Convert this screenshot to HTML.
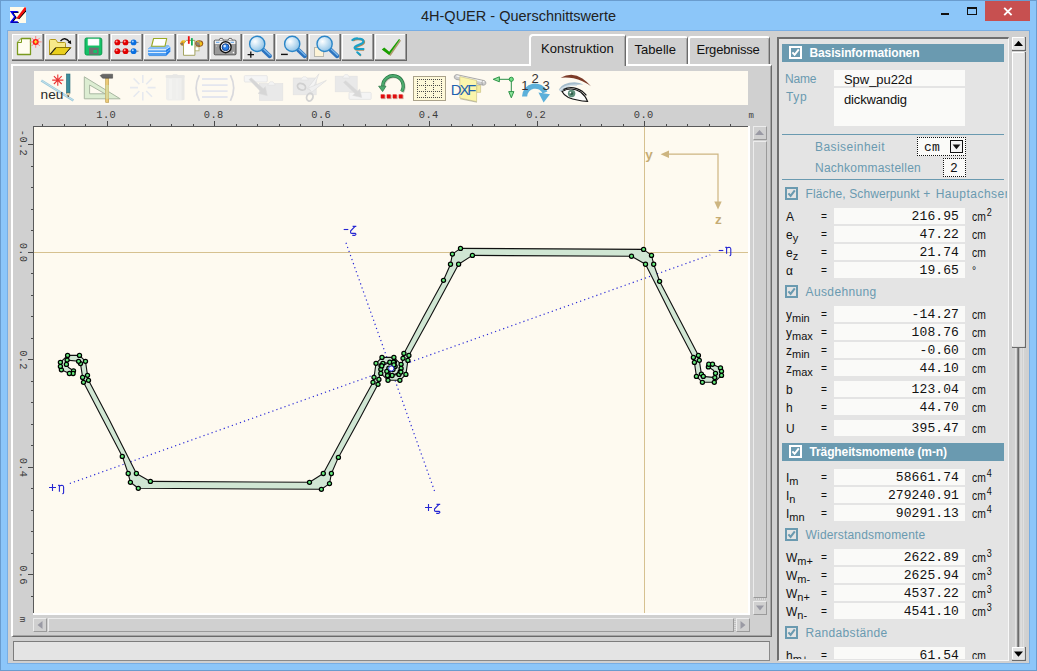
<!DOCTYPE html>
<html><head><meta charset="utf-8"><title>4H-QUER</title>
<style>
*{box-sizing:border-box;margin:0;padding:0}
html,body{width:1037px;height:671px;overflow:hidden;background:#8cc6f9;font-family:"Liberation Sans",sans-serif;}
div,span,i,b,svg{position:absolute}
.tb{top:34px;width:33px;height:27px;background:#e6e6e6;border-top:1px solid #fff;border-left:1px solid #fff;border-right:2px solid #6e6e6e;border-bottom:2px solid #6e6e6e}
.tab{background:#d0d0d0;font-size:13px;color:#111;letter-spacing:0.05px;white-space:nowrap}
.rl{font-family:"Liberation Mono",monospace;font-size:10px;color:#444;line-height:10px;white-space:pre}
.fld{left:834px;width:131px;height:16px;background:#fafaf8}
.val{width:125px;left:834px;text-align:right;font-family:"Liberation Mono",monospace;font-size:13px;line-height:16px;color:#111;white-space:pre;margin-top:1.2px;letter-spacing:0.1px}
.lab{left:786px;font-size:12px;line-height:16px;color:#111;white-space:nowrap;margin-top:0.7px}
.lab sub{position:static;font-size:11px;vertical-align:-3px;line-height:0}
.eq{left:820.5px;font-size:12px;line-height:16px;color:#111;margin-top:0.45px;transform:scaleX(0.85);transform-origin:0 0}
.un{left:972px;font-size:12px;line-height:16px;color:#111;letter-spacing:0.1px;white-space:nowrap;margin-top:0.7px;transform:scaleX(0.86);transform-origin:0 0}
.un sup{position:static;font-size:10.5px;vertical-align:4.5px;line-height:0;letter-spacing:0;margin-left:1px}
.sec{left:805.6px;font-size:12px;line-height:14px;color:#6a9ab0;letter-spacing:0.7px;white-space:nowrap}
.cb{left:785px;width:13px;height:13px;border:2px solid #6a9ab0;background:#e4e4e4}
.hd{left:782px;width:222px;height:18px;background:#6a9ab0}
.hd span{left:27.5px;top:1px;font-size:12px;font-weight:bold;color:#fff;line-height:16px;white-space:nowrap;letter-spacing:-0.12px}
</style></head><body>
<div style="left:0;top:0;width:1037px;height:671px;border:1px solid #6a9cce"></div>
<div style="left:7px;top:30px;width:1023px;height:634px;border:1px solid #78aee4"></div>
<div style="left:8px;top:31px;width:1021px;height:632px;background:#d0d0d0"></div>
<div style="left:0;top:6.5px;width:1037px;text-align:center;font-size:14.5px;color:#222;line-height:18px">4H-QUER - Querschnittswerte</div>
<svg style="left:10px;top:7px" width="16" height="16" viewBox="0 0 16 16"><rect width="16" height="16" fill="#fffbea"/><path d="M7.6 4.7H1.2L4.9 9.9 0.9 15.1H7.8" fill="none" stroke="#000" stroke-width="1.4" transform="translate(.9 .5)"/><path d="M7.6 4.7H1.2L4.9 9.9 0.9 15.1H7.8" fill="none" stroke="#0000f0" stroke-width="1.5"/><path d="M7.6 11.6L16 2.6V4.4L9.2 12.2z" fill="#000"/><path d="M6.6 11L14.6 0.2 16 0.6V3L8.8 11.8z" fill="#f40c0c"/><path d="M6 12L7 10.6 8.6 11.6z" fill="#e03030"/></svg>
<div style="left:941px;top:13px;width:8px;height:2px;background:#111"></div>
<div style="left:967px;top:7px;width:10px;height:8px;border:1px solid #111;border-top-width:2px"></div>
<div style="left:985px;top:1px;width:45px;height:20px;background:#c75050"></div>
<svg style="left:1003px;top:7px" width="10" height="9" viewBox="0 0 10 9"><path d="M1.2 0.8L8.6 8.2M8.6 0.8L1.2 8.2" stroke="#fff" stroke-width="1.9"/></svg>
<svg style="left:12px;top:34px" width="32" height="27" viewBox="0 0 32 27"><rect width="32" height="27" fill="#666"/><rect width="31" height="26" fill="#9c9c9c"/><rect width="30" height="25" fill="#ffffff"/><rect x="1" y="1" width="29" height="24" fill="#e5e5e5"/><defs><radialGradient id="mg" cx="0.36" cy="0.34" r="0.7"><stop offset="0" stop-color="#ffffff"/><stop offset="0.35" stop-color="#d6eaf7"/><stop offset="1" stop-color="#8fc2e6"/></radialGradient></defs><path d="M9.5 4.5H18.5V20.5H5.5V8.5z" fill="#fffdf0" stroke="#7a9a1e" stroke-width="1.3" stroke-linejoin="round"/><path d="M9.5 4.5V8.5H5.5" fill="#f4f6dc" stroke="#7a9a1e" stroke-width="1"/>
<g stroke="#ff7878" stroke-width=".9"><path d="M23.7 2V13.8M17.8 7.9H29.6M19.6 3.8L27.8 12M27.8 3.8L19.6 12"/></g><circle cx="23.7" cy="7.9" r="3" fill="#ff1414"/><path d="M23.7 6.3V9.5M22.1 7.9H25.3" stroke="#f4e83a" stroke-width="1.3"/></svg>
<svg style="left:45px;top:34px" width="32" height="27" viewBox="0 0 32 27"><rect width="32" height="27" fill="#666"/><rect width="31" height="26" fill="#9c9c9c"/><rect width="30" height="25" fill="#ffffff"/><rect x="1" y="1" width="29" height="24" fill="#e5e5e5"/><path d="M4.5 20.5V6.5Q4.5 5.5 5.5 5.5H10Q11 5.5 11.5 6.5L12.5 8.5H19.5Q20.5 8.5 20.5 9.5V20.5z" fill="#f7e98a" stroke="#b49a1a" stroke-width="1"/>
<path d="M4.8 20.6L10.8 13.5H25.8L19.5 20.6z" fill="#e9cf1e" stroke="#8a7408" stroke-width="1"/><path d="M5.4 20.2L10.8 13.9" stroke="#222" stroke-width="1.1"/><path d="M20 20.4L25.6 13.8" stroke="#222" stroke-width="1"/>
<path d="M15.5 7.2Q19.5 1.8 24.8 8.2" fill="none" stroke="#111" stroke-width="1.3"/><path d="M26.2 10.2L22.6 8.6 25.9 6.3z" fill="#111"/></svg>
<svg style="left:78px;top:34px" width="32" height="27" viewBox="0 0 32 27"><rect width="32" height="27" fill="#666"/><rect width="31" height="26" fill="#9c9c9c"/><rect width="30" height="25" fill="#ffffff"/><rect x="1" y="1" width="29" height="24" fill="#e5e5e5"/><path d="M8.5 4H22Q23.8 4 23.8 5.8V19.2Q23.8 21 22 21H8.8Q7 21 7 19.2V5.5Q7 4 8.5 4z" fill="#13c267" stroke="#0a9a4c" stroke-width="1"/>
<rect x="10" y="5" width="11" height="6.2" fill="#ffffff" stroke="#dff3e6" stroke-width=".6"/><rect x="11" y="13.6" width="9.6" height="7" fill="#707070"/><rect x="15.4" y="16" width="3.6" height="3" fill="#13c267"/></svg>
<svg style="left:111px;top:34px" width="32" height="27" viewBox="0 0 32 27"><rect width="32" height="27" fill="#666"/><rect width="31" height="26" fill="#9c9c9c"/><rect width="30" height="25" fill="#ffffff"/><rect x="1" y="1" width="29" height="24" fill="#e5e5e5"/><path d="M3.5 8.4H27.5M3.5 17.2H27.5" stroke="#808080" stroke-width="1"/><circle cx="6.4" cy="8.4" r="2.9" fill="#e00000"/><circle cx="5.6000000000000005" cy="7.5" r="1" fill="#ff9a9a"/><circle cx="14.5" cy="8.4" r="2.9" fill="#e00000"/><circle cx="13.7" cy="7.5" r="1" fill="#ff9a9a"/><circle cx="22.6" cy="8.4" r="2.9" fill="#0a6fe0"/><circle cx="21.8" cy="7.5" r="1" fill="#a8d4ff"/><circle cx="6.4" cy="17.2" r="2.9" fill="#e00000"/><circle cx="5.6000000000000005" cy="16.3" r="1" fill="#ff9a9a"/><circle cx="14.5" cy="17.2" r="2.9" fill="#e00000"/><circle cx="13.7" cy="16.3" r="1" fill="#ff9a9a"/><circle cx="22.6" cy="17.2" r="2.9" fill="#0a6fe0"/><circle cx="21.8" cy="16.3" r="1" fill="#a8d4ff"/></svg>
<svg style="left:144px;top:34px" width="32" height="27" viewBox="0 0 32 27"><rect width="32" height="27" fill="#666"/><rect width="31" height="26" fill="#9c9c9c"/><rect width="30" height="25" fill="#ffffff"/><rect x="1" y="1" width="29" height="24" fill="#e5e5e5"/><path d="M4 14.8L8.2 11.2H24.4L26.2 13V17.6L22.2 21.8H5L4 20.8z" fill="#519ff2"/>
<path d="M4 14.8L8.2 11.2H24.4L26.2 13 22 15.8H4z" fill="#86bef5"/><path d="M4.2 15.7H22L26.2 13" fill="none" stroke="#f6faff" stroke-width="1.1"/><path d="M22 15.8L26.2 13V17.6L22.2 21.8z" fill="#1f7ce8"/>
<path d="M4.2 18.5H22" stroke="#eef6fe" stroke-width=".9"/><path d="M22 18.6L26.2 15.4" stroke="#7ab6f4" stroke-width=".8"/><path d="M5 21.6H22.2" stroke="#3b8ae0" stroke-width=".7"/>
<path d="M9.6 4.5H22.7L21 12.2H7.6z" fill="#ffffff" stroke="#9aaa22" stroke-width="1.15" stroke-linejoin="round"/></svg>
<svg style="left:177px;top:34px" width="32" height="27" viewBox="0 0 32 27"><rect width="32" height="27" fill="#666"/><rect width="31" height="26" fill="#9c9c9c"/><rect width="30" height="25" fill="#ffffff"/><rect x="1" y="1" width="29" height="24" fill="#e5e5e5"/><rect x="17.8" y="12.8" width="4.2" height="4" fill="#ffffff" stroke="#b4b478" stroke-width=".9"/>
<path d="M6.5 9.8L9.4 6.4H17.9V21.3H6.5z" fill="#ffffff" stroke="#a4a462" stroke-width="1"/>
<rect x="10.9" y="2.2" width="1.8" height="7.6" fill="#ee1010"/><rect x="14" y="4.1" width="1.8" height="7.4" fill="#12b058"/>
<path d="M2.9 9.4L5 6.6 8.4 6.4 7.2 9 6.6 11.8 4.6 11.4z" fill="#e8a818"/><path d="M3 9.6L6 8.6 6.4 11.6 4.4 11.2z" fill="#8a7460"/><path d="M5.2 6.8L8 6.5 7.2 8.2z" fill="#f6d030"/>
<ellipse cx="22.2" cy="9.6" rx="4" ry="3.3" fill="#9a5a18"/><path d="M19 8.4Q21 6.4 24 7.2L24.4 11.4H19.6z" fill="#8c8478"/><path d="M22.4 7.4Q25.4 7.4 25.2 10.6L23.4 12 22.6 9.6z" fill="#f2c018"/><path d="M19.4 7.8L21.6 6.8 21.8 8.4z" fill="#f2c018"/></svg>
<svg style="left:210px;top:34px" width="32" height="27" viewBox="0 0 32 27"><rect width="32" height="27" fill="#666"/><rect width="31" height="26" fill="#9c9c9c"/><rect width="30" height="25" fill="#ffffff"/><rect x="1" y="1" width="29" height="24" fill="#e5e5e5"/><rect x="4.2" y="6.2" width="21.8" height="14.6" rx="1" fill="#9c9c9c" stroke="#4a4a4a" stroke-width="1"/><rect x="4.8" y="6.6" width="20.6" height="3.4" fill="#f2f2f2"/><path d="M9 6.2L10 4.4H12.4L13.4 6.2M18 6.2L19 4.4H21.4L22.4 6.2" fill="#f2f2f2" stroke="#4a4a4a" stroke-width=".8"/>
<path d="M6 8.3H9.4M20.6 8.3H24" stroke="#5aa0e8" stroke-width="1"/><rect x="5" y="10.8" width="20" height="9.4" fill="#9a9a9a"/>
<circle cx="15.6" cy="13.2" r="5.5" fill="#fff" stroke="#111" stroke-width="1.4"/><circle cx="15.6" cy="13.2" r="3.5" fill="#2a7ee6" stroke="#0b2a66" stroke-width=".8"/><circle cx="14.7" cy="12.1" r="1.3" fill="#cfe6ff"/>
<circle cx="23.4" cy="18.6" r=".8" fill="#fff"/><circle cx="6.4" cy="12" r=".6" fill="#ddd"/></svg>
<svg style="left:243px;top:34px" width="32" height="27" viewBox="0 0 32 27"><rect width="32" height="27" fill="#666"/><rect width="31" height="26" fill="#9c9c9c"/><rect width="30" height="25" fill="#ffffff"/><rect x="1" y="1" width="29" height="24" fill="#e5e5e5"/><path d="M20.2 15.9L26.799999999999997 22.1" stroke="#2c74c0" stroke-width="4.2" stroke-linecap="round"/><path d="M20.799999999999997 15.3L27.2 21.3" stroke="#7db8ea" stroke-width="1.2" stroke-linecap="round"/><circle cx="14.2" cy="9.9" r="7.6" fill="url(#mg)" stroke="#2b86c8" stroke-width="1.4"/><path d="M4.6 20.6H11M7.8 17.4V23.8" stroke="#111" stroke-width="1.3"/></svg>
<svg style="left:276px;top:34px" width="32" height="27" viewBox="0 0 32 27"><rect width="32" height="27" fill="#666"/><rect width="31" height="26" fill="#9c9c9c"/><rect width="30" height="25" fill="#ffffff"/><rect x="1" y="1" width="29" height="24" fill="#e5e5e5"/><path d="M22.2 15.9L28.799999999999997 22.1" stroke="#2c74c0" stroke-width="4.2" stroke-linecap="round"/><path d="M22.799999999999997 15.3L29.2 21.3" stroke="#7db8ea" stroke-width="1.2" stroke-linecap="round"/><circle cx="16.2" cy="9.9" r="7.6" fill="url(#mg)" stroke="#2b86c8" stroke-width="1.4"/><path d="M5 20.4H11.8" stroke="#111" stroke-width="1.4"/></svg>
<svg style="left:309px;top:34px" width="32" height="27" viewBox="0 0 32 27"><rect width="32" height="27" fill="#666"/><rect width="31" height="26" fill="#9c9c9c"/><rect width="30" height="25" fill="#ffffff"/><rect x="1" y="1" width="29" height="24" fill="#e5e5e5"/><rect x="5.5" y="13.5" width="9" height="9" fill="#fdf3d6" stroke="#b8b8b0" stroke-width="1"/><path d="M21.6 15.9L28.2 22.1" stroke="#2c74c0" stroke-width="4.2" stroke-linecap="round"/><path d="M22.2 15.3L28.6 21.3" stroke="#7db8ea" stroke-width="1.2" stroke-linecap="round"/><circle cx="15.6" cy="9.9" r="7.6" fill="url(#mg)" stroke="#2b86c8" stroke-width="1.4"/></svg>
<svg style="left:342px;top:34px" width="32" height="27" viewBox="0 0 32 27"><rect width="32" height="27" fill="#666"/><rect width="31" height="26" fill="#9c9c9c"/><rect width="30" height="25" fill="#ffffff"/><rect x="1" y="1" width="29" height="24" fill="#e5e5e5"/><path d="M10.4 6Q12.6 4.2 16 4.5 20.6 4.6 21.4 7 21.8 9 17 10.8 12.4 12.6 12.6 13.8 13 15.2 16.4 15L21.4 15" fill="none" stroke="#b08a5c" stroke-width="2.1" transform="translate(.7 .8)" stroke-linejoin="round"/><path d="M10.4 6Q12.6 4.2 16 4.5 20.6 4.6 21.4 7 21.8 9 17 10.8 12.4 12.6 12.6 13.8 13 15.2 16.4 15L21.4 15" fill="none" stroke="#18a0c8" stroke-width="2.2" stroke-linecap="round" stroke-linejoin="round"/><path d="M15.4 18.4L18.4 21" stroke="#b08a5c" stroke-width="1.8" transform="translate(.6 .7)"/><path d="M15.2 18.2L18.2 20.8" stroke="#18a0c8" stroke-width="2" stroke-linecap="round"/></svg>
<svg style="left:375px;top:34px" width="32" height="27" viewBox="0 0 32 27"><rect width="32" height="27" fill="#666"/><rect width="31" height="26" fill="#9c9c9c"/><rect width="30" height="25" fill="#ffffff"/><rect x="1" y="1" width="29" height="24" fill="#e5e5e5"/><path d="M7.6 15.6L9.6 14 14.6 18.4 24.2 5.4 25.6 6 15 21.4z" fill="#a08a50" opacity=".8" transform="translate(.5 .6)"/><path d="M6.8 15.4L9.2 13.6 14.2 17.8 24 5 25 5.6 14.2 21z" fill="#18a000"/></svg>
<div style="left:11px;top:64px;width:761px;height:573px;border-top:2px solid #ffffff;border-left:2px solid #ffffff;border-right:1px solid #6a6a6a;border-bottom:1px solid #6a6a6a"></div><div style="left:13px;top:66px;width:758px;height:570px;border-right:1px solid #a4a4a4;border-bottom:1px solid #a4a4a4"></div>
<div class="tab" style="left:626px;top:36px;width:62px;height:28px;border-top:2px solid #ffffff;border-left:2px solid #ffffff;border-right:1px solid #6a6a6a;box-shadow:inset -1px 0 0 #a8a8a8;border-radius:3px 3px 0 0"></div>
<div class="tab" style="left:634.5px;top:42.4px;line-height:16px;background:none;letter-spacing:0.05px">Tabelle</div>
<div class="tab" style="left:688px;top:36px;width:82px;height:28px;border-top:2px solid #ffffff;border-left:2px solid #ffffff;border-right:1px solid #6a6a6a;box-shadow:inset -1px 0 0 #a8a8a8;border-radius:3px 3px 0 0"></div>
<div class="tab" style="left:696.5px;top:42.4px;line-height:16px;background:none;letter-spacing:-0.2px">Ergebnisse</div>
<div class="tab" style="left:529px;top:34px;width:97px;height:32px;border-top:2px solid #ffffff;border-left:2px solid #ffffff;border-right:1px solid #6a6a6a;box-shadow:inset -1px 0 0 #a8a8a8;border-radius:4px 3px 0 0"></div>
<div style="left:531px;top:64px;width:93px;height:3px;background:#d0d0d0"></div>
<div class="tab" style="left:541px;top:40.5px;line-height:16px;background:none">Konstruktion</div>
<svg style="left:34px;top:71px" width="714" height="34" viewBox="34 71 714 34">
<rect x="34" y="71" width="714" height="34" fill="#fefaf0"/>
<path d="M41.3 80.4L73.4 100.4" stroke="#9ccadb" stroke-width="2.4"/><path d="M41.3 80.4L73.4 100.4" stroke="#d6eaf0" stroke-width=".7"/>
<g stroke="#ea3434" stroke-width="1.1"><path d="M57.8 74.4V85.8M52.2 80.1H63.4M53.9 76.2L61.7 84M61.7 76.2L53.9 84"/></g>
<rect x="66.4" y="74" width="3.6" height="19" fill="#3c8e9c" stroke="#2a6c78" stroke-width=".6"/><path d="M66.4 93H70L68.2 97z" fill="#f4e2b8" stroke="#8a7a50" stroke-width=".4"/><path d="M67.5 95.4H68.9L68.2 97.2z" fill="#111"/>
<text x="40.6" y="99.3" font-family="Liberation Sans" font-size="13.6" fill="#2a2a2a">neu</text>
<path d="M84.3 76.8V98.8H120.2z" fill="#dcedd2" stroke="#a9b7a2" stroke-width="1"/><path d="M89.6 85V93.8H105z" fill="#fefaf0" stroke="#a9b7a2" stroke-width="1"/>
<rect x="105.7" y="78" width="3" height="24.4" fill="#ecc976" stroke="#b89848" stroke-width=".6"/><path d="M100.2 75.6L102.6 74.2H112.6V78.2H102.6z" fill="#666" stroke="#444" stroke-width=".5"/><rect x="105.7" y="85" width="3" height="13.8" fill="#d6dca6" opacity=".75"/>
<g stroke="#e6e9ef" stroke-width="1.6"><path d="M142.8 75V83M142.8 92V100.6M130 87.6H138M147.6 87.6H155.6M133.6 78.4L139.4 84.2M146.2 91L152 96.8M152 78.4L146.2 84.2M139.4 91L133.6 96.8"/></g>
<path d="M166 77H184.4V98.6Q184.4 100.4 182.4 100.4H168Q166 100.4 166 98.6z" fill="#efefed"/><rect x="165.6" y="75" width="19.2" height="3" rx="1.2" fill="#e7e7e5"/><rect x="172.8" y="74.2" width="4.6" height="1.4" fill="#e7e7e5"/><rect x="169" y="79" width="3" height="20" fill="#f3f3f1"/><rect x="176" y="79" width="2.4" height="20" fill="#f1f1ef"/><rect x="181.6" y="78" width="2.8" height="22" fill="#e8e8e6"/>
<path d="M199.4 75.2Q192.8 88 199.4 100.8M230.4 75.2Q237 88 230.4 100.8" fill="none" stroke="#d9d9dd" stroke-width="1.7"/>
<path d="M202 79H227.6M202 85.1H227.6M202 91.1H227.6M202 97H227.6" stroke="#e4e6ee" stroke-width="1.8"/>
<rect x="259.4" y="83.6" width="23.4" height="16.8" fill="#e9e9e9" stroke="#e2e2e2" stroke-width=".6"/><path d="M267.6 85.2L270 81.8H273L275.4 85.2z" fill="#f4f4f4" stroke="#e0e0e0" stroke-width=".6"/>
<rect x="244.3" y="75.6" width="23" height="6.4" rx="1" fill="#f5f5f5" stroke="#e3e3e3" stroke-width=".8"/>
<path d="M249 79.6L251.2 77.8 263.2 88.6 265.4 86.6 267.4 95.8 258 93.4 260.4 91.2z" fill="#d6d6d6" stroke="#dedede" stroke-width=".5"/>
<rect x="293.2" y="78" width="23" height="16.8" fill="#e9e9e9" stroke="#e2e2e2" stroke-width=".6"/><path d="M300.6 80L303 76.8H306L308.4 80z" fill="#f4f4f4" stroke="#e0e0e0" stroke-width=".6"/>
<path d="M307.2 88.8L318.9 73.8 312.4 91z" fill="#f4f4f4" stroke="#dadada" stroke-width=".6"/><path d="M308.4 88L326.4 80.4 311.8 92.2z" fill="#f0f0f0" stroke="#dadada" stroke-width=".6"/>
<ellipse cx="301.4" cy="86.8" rx="4.2" ry="3.1" fill="none" stroke="#cfcfcf" stroke-width="1.8" transform="rotate(25 301.6 87)"/><ellipse cx="309.8" cy="97" rx="3.1" ry="4" fill="none" stroke="#d2d2d2" stroke-width="1.8" transform="rotate(20 309.6 97)"/>
<rect x="335.2" y="76.2" width="22" height="15.6" fill="#e9e9e9" stroke="#e2e2e2" stroke-width=".6"/><path d="M342.4 78L344.8 74.6H347.6L350 78z" fill="#f4f4f4" stroke="#e0e0e0" stroke-width=".6"/>
<rect x="349" y="92.4" width="22.2" height="7" rx="1" fill="#f4f4f4" stroke="#e3e3e3" stroke-width=".8"/>
<path d="M343.4 82.4L345.6 80.4 357.6 91 359.8 89 361.8 97.6 352.6 95.4 354.8 93.4z" fill="#d8d8d8" stroke="#dedede" stroke-width=".5"/>
<path d="M401.65 91.4A10.2 10.2 0 1 0 382.8 86" fill="none" stroke="#6a6a5a" stroke-width="3.4" transform="translate(.7 .8)" opacity=".35"/>
<path d="M401.65 91.4A10.2 10.2 0 1 0 382.8 86" fill="none" stroke="#24713f" stroke-width="3.3"/>
<path d="M401.65 91.4A10.2 10.2 0 1 0 382.8 86" fill="none" stroke="#4dab6e" stroke-width="2.1"/>
<path d="M378.6 86.2H386L382.6 91.6z" fill="#4dab6e" stroke="#24713f" stroke-width=".7" stroke-linejoin="round"/>
<rect x="381.09999999999997" y="94.9" width="4.4" height="4.2" fill="#a84a3a" opacity=".5"/><rect x="380.7" y="94.4" width="3.9" height="3.8" fill="#e00c0c"/>
<rect x="387.09999999999997" y="94.9" width="4.4" height="4.2" fill="#a84a3a" opacity=".5"/><rect x="386.7" y="94.4" width="3.9" height="3.8" fill="#e00c0c"/>
<rect x="393.09999999999997" y="94.9" width="4.4" height="4.2" fill="#a84a3a" opacity=".5"/><rect x="392.7" y="94.4" width="3.9" height="3.8" fill="#e00c0c"/>
<rect x="399.09999999999997" y="94.9" width="4.4" height="4.2" fill="#a84a3a" opacity=".5"/><rect x="398.7" y="94.4" width="3.9" height="3.8" fill="#e00c0c"/>
<rect x="413.5" y="76.5" width="32" height="24" fill="#fdf8d8" stroke="#aaa28a" stroke-width="1"/>
<g stroke="#4a4a4a" stroke-width="1" stroke-dasharray="1 1" shape-rendering="crispEdges">
<path d="M417.5 79V99"/>
<path d="M425.5 79V99"/>
<path d="M433.5 79V99"/>
<path d="M441.5 79V99"/>
<path d="M417 79.5H443"/>
<path d="M417 85.5H443"/>
<path d="M417 91.5H443"/>
<path d="M417 97.5H443"/>
</g>
<path d="M476.6 85.4H480.6V92.4H476.6z" fill="#f3eb9a" stroke="#b8b070" stroke-width=".5"/>
<path d="M456.8 74.6L484.4 80.6Q486.4 81.6 485.8 83.8 485 85.6 483 85.2L455.6 79.2Q453.8 78.2 454.4 76.2 455.2 74.4 456.8 74.6z" fill="#cdcdcd" stroke="#8a8a8a" stroke-width=".6"/><path d="M456.4 75.8L484.2 81.8" stroke="#f8f8f8" stroke-width="1.3"/><path d="M482.6 80.4Q481.4 82.6 482.4 84.8" fill="none" stroke="#8a8a8a" stroke-width=".6"/>
<path d="M459.8 76.6L476.6 80.4V101.6L459.8 98z" fill="#fbf5ac" stroke="#c4bc78" stroke-width=".6"/><path d="M460.2 98.8L477 102.2" stroke="#8a8a70" stroke-width=".9" opacity=".55"/>
<text x="450.8" y="95.4" font-family="Liberation Sans" font-size="14.8" fill="#1f62b0" letter-spacing="-2">DXF</text>
<path d="M498 79.3H511.3V92" fill="none" stroke="#2a8f46" stroke-width="1"/><path d="M493.2 79.3L499.4 76.8V81.8z" fill="#8fe49c" stroke="#1f8a3c" stroke-width=".9"/><path d="M511.3 97.8L508.7 91.6H513.9z" fill="#8fe49c" stroke="#1f8a3c" stroke-width=".9"/><circle cx="511.3" cy="79.3" r="2.1" fill="#6fdc84" stroke="#1f8a3c" stroke-width=".9"/>
<path d="M524.6 96.6A10.6 10.6 0 0 1 545 92.6" fill="none" stroke="#5cb0da" stroke-width="5.2"/><path d="M538.4 92.6L550 94.2 543.6 102.4z" fill="#5cb0da"/>
<g font-family="Liberation Sans" fill="#333"><text x="521.2" y="90.4" font-size="13">1</text><text x="531.6" y="83.4" font-size="13">2</text><text x="542.4" y="89.8" font-size="13">3</text></g>
<path d="M560.6 77.8Q572 71.6 582.4 78.4 587.6 82 591 86.2 582.6 80.2 573.6 78.2 566.6 77 560.6 77.8z" fill="#7c3b28"/>
<path d="M558.8 89.4Q562.4 82.4 574.6 82.2 580 82.4 583.4 84.6 575 83.8 569.4 86.6 564.4 88.8 561 91.8z" fill="#a4bccb"/><path d="M559.4 90.6Q566 84.6 577 85.4" fill="none" stroke="#d5e0e6" stroke-width="1.4"/>
<path d="M562 91.4Q571.4 86.2 580.6 92 585.6 96 587.6 101.4 576.6 100.6 568.4 97.4 563.6 94.8 562 91.4z" fill="#fdfdfb" stroke="#141414" stroke-width="1.1"/>
<path d="M563.4 89.6Q572.4 84.8 582.6 91.6 584.6 93.2 586.4 95.4" fill="none" stroke="#141414" stroke-width="1.2"/>
<circle cx="571.6" cy="93.5" r="3.7" fill="#5f8f7b"/><circle cx="571.6" cy="93.5" r="1.6" fill="#2f5f4b"/><circle cx="570.4" cy="92.6" r=".9" fill="#fff"/>
</svg>
<svg style="left:12px;top:106px" width="758" height="530" viewBox="12 106 758 530">
<rect x="33" y="126" width="717" height="489" fill="#ffffff"/>
<rect x="33" y="126" width="715" height="487" fill="#5a5a5a"/>
<rect x="34" y="127" width="714" height="486" fill="#fefaf0"/>
<g stroke="#4a4a4a" stroke-width="1" shape-rendering="crispEdges">
<path d="M644.5 121V126"/>
<path d="M623.5 124V126"/>
<path d="M601.5 124V126"/>
<path d="M580.5 124V126"/>
<path d="M558.5 124V126"/>
<path d="M537.5 121V126"/>
<path d="M515.5 124V126"/>
<path d="M494.5 124V126"/>
<path d="M472.5 124V126"/>
<path d="M451.5 124V126"/>
<path d="M429.5 121V126"/>
<path d="M408.5 124V126"/>
<path d="M386.5 124V126"/>
<path d="M365.5 124V126"/>
<path d="M343.5 124V126"/>
<path d="M322.5 121V126"/>
<path d="M300.5 124V126"/>
<path d="M279.5 124V126"/>
<path d="M257.5 124V126"/>
<path d="M236.5 124V126"/>
<path d="M214.5 121V126"/>
<path d="M193.5 124V126"/>
<path d="M171.5 124V126"/>
<path d="M150.5 124V126"/>
<path d="M128.5 124V126"/>
<path d="M107.5 121V126"/>
<path d="M85.5 124V126"/>
<path d="M64.5 124V126"/>
<path d="M42.5 124V126"/>
<path d="M666.5 124V126"/>
<path d="M687.5 124V126"/>
<path d="M709.5 124V126"/>
<path d="M730.5 124V126"/>
<path d="M28 144.5H33"/>
<path d="M31 166.5H33"/>
<path d="M31 187.5H33"/>
<path d="M31 209.5H33"/>
<path d="M31 230.5H33"/>
<path d="M28 252.5H33"/>
<path d="M31 273.5H33"/>
<path d="M31 295.5H33"/>
<path d="M31 316.5H33"/>
<path d="M31 338.5H33"/>
<path d="M28 359.5H33"/>
<path d="M31 381.5H33"/>
<path d="M31 402.5H33"/>
<path d="M31 424.5H33"/>
<path d="M31 445.5H33"/>
<path d="M28 467.5H33"/>
<path d="M31 488.5H33"/>
<path d="M31 510.5H33"/>
<path d="M31 531.5H33"/>
<path d="M31 553.5H33"/>
<path d="M28 574.5H33"/>
<path d="M31 596.5H33"/>
</g>
<g font-family="Liberation Mono" font-size="10.4" fill="#3c3c3c" letter-spacing="0.35">
<text x="106.2" y="117.9" text-anchor="middle">1.0</text>
<text x="213.7" y="117.9" text-anchor="middle">0.8</text>
<text x="321.2" y="117.9" text-anchor="middle">0.6</text>
<text x="428.7" y="117.9" text-anchor="middle">0.4</text>
<text x="536.2" y="117.9" text-anchor="middle">0.2</text>
<text x="643.7" y="117.9" text-anchor="middle">0.0</text>
<text x="751.5" y="118.4" text-anchor="middle" font-size="9">m</text>
<text transform="translate(19.8 143) rotate(90)" text-anchor="middle">-0.2</text>
<text transform="translate(19.8 252.5) rotate(90)" text-anchor="middle">0.0</text>
<text transform="translate(19.8 360) rotate(90)" text-anchor="middle">0.2</text>
<text transform="translate(19.8 467.5) rotate(90)" text-anchor="middle">0.4</text>
<text transform="translate(19.8 575) rotate(90)" text-anchor="middle">0.6</text>
<text transform="translate(20.2 619.5) rotate(90)" text-anchor="middle" font-size="9">m</text>
</g>
</svg>
<svg style="left:34px;top:127px" width="714" height="486" viewBox="34 127 714 486">
<g stroke="#d6c190" stroke-width="1" shape-rendering="crispEdges"><path d="M34 252.5H748"/><path d="M644.5 127V613"/></g>
<g fill="#cdb581" stroke="none"><path d="M668 153.6H718.6V202H717.4V154.8H668z"/><path d="M660.6 154.2L669 150.5V157.9z"/><path d="M718 209.4L714.3 201.4H721.7z"/></g>
<g font-family="Liberation Sans" font-weight="bold" font-size="13.5" fill="#c6ac74"><text x="645.2" y="159">y</text><text x="715" y="224.4">z</text></g>
<g stroke="#2a2ad8" stroke-width="1.2" stroke-dasharray="1.2 3.1" fill="none"><path d="M69.8 483.5L710.2 254.9"/><path d="M346.0 242.8L435.3 493.2"/></g>
<polygon points="67.6,355.4 79.5,355.4 85.5,361.3 87.5,375.3 88.5,380.3 109.4,420.0 121.3,443.8 136.4,473.5 150.4,481.4 309.5,482.3 323.3,473.5 352.1,420.0 373.0,382.3 374.0,377.3 376.0,363.3 382.0,357.4 393.9,357.4 401.1,364.3 401.1,368.4 400.1,371.8 392.1,375.5 388.4,375.5 388.0,372.8 393.0,369.5 395.1,366.4 394.4,362.1 382.9,363.3 381.0,365.6 378.9,379.4 378.0,384.3 359.0,420.0 338.4,457.4 331.4,473.5 329.5,483.6 321.4,489.3 138.3,488.3 130.4,482.3 128.2,473.5 122.3,456.4 103.2,420.0 83.5,382.3 82.6,377.4 80.5,363.6 78.6,361.3 67.1,360.1 66.4,364.4 68.5,367.5 73.5,370.8 73.1,373.5 69.4,373.5 61.4,369.8 60.4,366.4 60.4,362.3" fill="#d0e6d3" stroke="#101010" stroke-width="1.1" stroke-linejoin="round"/>
<polygon points="714.3,382.3 702.4,382.3 696.4,376.4 694.4,362.4 693.4,357.4 672.5,317.7 660.6,293.9 645.5,264.2 631.5,256.3 472.4,255.4 458.6,264.2 429.8,317.7 408.9,355.4 407.9,360.4 405.9,374.4 399.9,380.3 388.0,380.3 380.8,373.4 380.8,369.3 381.8,365.9 389.8,362.2 393.5,362.2 393.9,364.9 388.9,368.2 386.8,371.3 387.5,375.6 399.0,374.4 400.9,372.1 403.0,358.3 403.9,353.4 422.9,317.7 443.5,280.3 450.5,264.2 452.4,254.1 460.5,248.4 643.6,249.4 651.5,255.4 653.7,264.2 659.6,281.3 678.7,317.7 698.4,355.4 699.3,360.3 701.4,374.1 703.3,376.4 714.8,377.6 715.5,373.3 713.4,370.2 708.4,366.9 708.8,364.2 712.5,364.2 720.5,367.9 721.5,371.3 721.5,375.4" fill="#d0e6d3" stroke="#101010" stroke-width="1.1" stroke-linejoin="round"/>
<g fill="#64ec7c" stroke="#000" stroke-width="1.25">
<circle cx="67.6" cy="355.4" r="2.05"/>
<circle cx="79.5" cy="355.4" r="2.05"/>
<circle cx="85.5" cy="361.3" r="2.05"/>
<circle cx="87.5" cy="375.3" r="2.05"/>
<circle cx="88.5" cy="380.3" r="2.05"/>
<circle cx="136.4" cy="473.5" r="2.05"/>
<circle cx="150.4" cy="481.4" r="2.05"/>
<circle cx="309.5" cy="482.3" r="2.05"/>
<circle cx="323.3" cy="473.5" r="2.05"/>
<circle cx="373.0" cy="382.3" r="2.05"/>
<circle cx="374.0" cy="377.3" r="2.05"/>
<circle cx="376.0" cy="363.3" r="2.05"/>
<circle cx="382.0" cy="357.4" r="2.05"/>
<circle cx="393.9" cy="357.4" r="2.05"/>
<circle cx="401.1" cy="364.3" r="2.05"/>
<circle cx="401.1" cy="368.4" r="2.05"/>
<circle cx="400.1" cy="371.8" r="2.05"/>
<circle cx="392.1" cy="375.5" r="2.05"/>
<circle cx="388.4" cy="375.5" r="2.05"/>
<circle cx="388.0" cy="372.8" r="2.05"/>
<circle cx="393.0" cy="369.5" r="2.05"/>
<circle cx="395.1" cy="366.4" r="2.05"/>
<circle cx="394.4" cy="362.1" r="2.05"/>
<circle cx="382.9" cy="363.3" r="2.05"/>
<circle cx="381.0" cy="365.6" r="2.05"/>
<circle cx="378.9" cy="379.4" r="2.05"/>
<circle cx="378.0" cy="384.3" r="2.05"/>
<circle cx="338.4" cy="457.4" r="2.05"/>
<circle cx="331.4" cy="473.5" r="2.05"/>
<circle cx="329.5" cy="483.6" r="2.05"/>
<circle cx="321.4" cy="489.3" r="2.05"/>
<circle cx="138.3" cy="488.3" r="2.05"/>
<circle cx="130.4" cy="482.3" r="2.05"/>
<circle cx="128.2" cy="473.5" r="2.05"/>
<circle cx="122.3" cy="456.4" r="2.05"/>
<circle cx="83.5" cy="382.3" r="2.05"/>
<circle cx="82.6" cy="377.4" r="2.05"/>
<circle cx="80.5" cy="363.6" r="2.05"/>
<circle cx="78.6" cy="361.3" r="2.05"/>
<circle cx="67.1" cy="360.1" r="2.05"/>
<circle cx="66.4" cy="364.4" r="2.05"/>
<circle cx="73.5" cy="370.8" r="2.05"/>
<circle cx="73.1" cy="373.5" r="2.05"/>
<circle cx="69.4" cy="373.5" r="2.05"/>
<circle cx="61.4" cy="369.8" r="2.05"/>
<circle cx="60.4" cy="366.4" r="2.05"/>
<circle cx="60.4" cy="362.3" r="2.05"/>
<circle cx="714.3" cy="382.3" r="2.05"/>
<circle cx="702.4" cy="382.3" r="2.05"/>
<circle cx="696.4" cy="376.4" r="2.05"/>
<circle cx="694.4" cy="362.4" r="2.05"/>
<circle cx="693.4" cy="357.4" r="2.05"/>
<circle cx="645.5" cy="264.2" r="2.05"/>
<circle cx="631.5" cy="256.3" r="2.05"/>
<circle cx="472.4" cy="255.4" r="2.05"/>
<circle cx="458.6" cy="264.2" r="2.05"/>
<circle cx="408.9" cy="355.4" r="2.05"/>
<circle cx="407.9" cy="360.4" r="2.05"/>
<circle cx="405.9" cy="374.4" r="2.05"/>
<circle cx="399.9" cy="380.3" r="2.05"/>
<circle cx="388.0" cy="380.3" r="2.05"/>
<circle cx="380.8" cy="373.4" r="2.05"/>
<circle cx="380.8" cy="369.3" r="2.05"/>
<circle cx="381.8" cy="365.9" r="2.05"/>
<circle cx="389.8" cy="362.2" r="2.05"/>
<circle cx="393.5" cy="362.2" r="2.05"/>
<circle cx="393.9" cy="364.9" r="2.05"/>
<circle cx="388.9" cy="368.2" r="2.05"/>
<circle cx="386.8" cy="371.3" r="2.05"/>
<circle cx="387.5" cy="375.6" r="2.05"/>
<circle cx="399.0" cy="374.4" r="2.05"/>
<circle cx="400.9" cy="372.1" r="2.05"/>
<circle cx="403.0" cy="358.3" r="2.05"/>
<circle cx="403.9" cy="353.4" r="2.05"/>
<circle cx="443.5" cy="280.3" r="2.05"/>
<circle cx="450.5" cy="264.2" r="2.05"/>
<circle cx="452.4" cy="254.1" r="2.05"/>
<circle cx="460.5" cy="248.4" r="2.05"/>
<circle cx="643.6" cy="249.4" r="2.05"/>
<circle cx="651.5" cy="255.4" r="2.05"/>
<circle cx="653.7" cy="264.2" r="2.05"/>
<circle cx="659.6" cy="281.3" r="2.05"/>
<circle cx="698.4" cy="355.4" r="2.05"/>
<circle cx="699.3" cy="360.3" r="2.05"/>
<circle cx="701.4" cy="374.1" r="2.05"/>
<circle cx="703.3" cy="376.4" r="2.05"/>
<circle cx="714.8" cy="377.6" r="2.05"/>
<circle cx="715.5" cy="373.3" r="2.05"/>
<circle cx="708.4" cy="366.9" r="2.05"/>
<circle cx="708.8" cy="364.2" r="2.05"/>
<circle cx="712.5" cy="364.2" r="2.05"/>
<circle cx="720.5" cy="367.9" r="2.05"/>
<circle cx="721.5" cy="371.3" r="2.05"/>
<circle cx="721.5" cy="375.4" r="2.05"/>
</g>
<circle cx="391.3" cy="368.5" r="2.6" fill="#ffffff" stroke="#2a2ad8" stroke-width="1"/>
<g fill="none" stroke="#2626d2" stroke-width="1.1" stroke-linejoin="round">
<path d="M49 487.5H56M52.5 484V491"/><path transform="translate(58 485)" d="M0.1 0.4H1.4V6.8M1.4 1.3Q2.4 0.3 4 0.3 5.6 0.5 5.6 2V7.6Q5.5 8.6 4.3 8.7"/>
<path d="M718.7 250.5H723.3000000000001"/><path transform="translate(725.2 247)" d="M0.1 0.4H1.4V6.8M1.4 1.3Q2.4 0.3 4 0.3 5.6 0.5 5.6 2V7.6Q5.5 8.6 4.3 8.7"/>
<path d="M425 507.5H432M428.5 504V511"/><path transform="translate(433.8 504)" d="M2.7 0.4H6.4M4.9 0.6L0.7 5V6.6Q0.9 7.4 2 7.4H5.6Q6.2 7.6 6 8.6 5.6 9.4 4.8 9.4H2.4"/>
<path d="M343.7 229.5H348.3"/><path transform="translate(349.9 226)" d="M2.7 0.4H6.4M4.9 0.6L0.7 5V6.6Q0.9 7.4 2 7.4H5.6Q6.2 7.6 6 8.6 5.6 9.4 4.8 9.4H2.4"/>
</g>
</svg>
<div style="left:753px;top:126px;width:14px;height:14px;background:#d0d0d0;border-top:1px solid #ececec;border-left:1px solid #ececec;border-right:1px solid #9a9a9a;border-bottom:1px solid #9a9a9a"></div>
<svg style="left:753px;top:126px" width="14" height="14"><path d="M2 9H11L6.5 4z" fill="#9a9aa4"/></svg>
<div style="left:753px;top:141px;width:14px;height:457px;background:#d0d0d0;border-top:1px solid #ececec;border-left:1px solid #ececec;border-right:1px solid #9a9a9a;border-bottom:1px solid #9a9a9a"></div>
<div style="left:755px;top:598px;width:11px;height:2px;background:repeating-linear-gradient(90deg,#c2c2c2 0 1px,#dadada 1px 2px)"></div>
<div style="left:753px;top:601px;width:14px;height:14px;background:#d0d0d0;border-top:1px solid #ececec;border-left:1px solid #ececec;border-right:1px solid #9a9a9a;border-bottom:1px solid #9a9a9a"></div>
<svg style="left:753px;top:601px" width="14" height="14"><path d="M3 4.5H11L7 9.5z" fill="#9a9aa4"/></svg>
<div style="left:33px;top:618px;width:14px;height:14px;background:#d0d0d0;border-top:1px solid #ececec;border-left:1px solid #ececec;border-right:1px solid #9a9a9a;border-bottom:1px solid #9a9a9a"></div>
<svg style="left:33px;top:618px" width="14" height="14"><path d="M9.5 3V11L4.5 7z" fill="#9a9aa4"/></svg>
<div style="left:48px;top:618px;width:686px;height:14px;background:#d0d0d0;border-top:1px solid #ececec;border-left:1px solid #ececec;border-right:1px solid #9a9a9a;border-bottom:1px solid #9a9a9a"></div>
<div style="left:734px;top:620px;width:2px;height:11px;background:repeating-linear-gradient(180deg,#c2c2c2 0 1px,#dadada 1px 2px)"></div>
<div style="left:736px;top:618px;width:14px;height:14px;background:#d0d0d0;border-top:1px solid #ececec;border-left:1px solid #ececec;border-right:1px solid #9a9a9a;border-bottom:1px solid #9a9a9a"></div>
<svg style="left:736px;top:618px" width="14" height="14"><path d="M4.5 3V11L9.5 7z" fill="#9a9aa4"/></svg>
<div style="left:13px;top:641px;width:757px;height:20px;background:#e4e4e4;border:1px solid #7c7c7c;border-right-color:#8a8a8a;border-bottom-color:#8a8a8a"></div>
<div style="left:777px;top:37px;width:232px;height:624px;background:#e4e4e4;border-top:2px solid #6e6e6e;border-left:2px solid #6e6e6e;border-right:1px solid #f8f8f8;border-bottom:1px solid #f8f8f8"></div>
<div style="left:779px;top:39px;width:228px;height:620px;overflow:hidden">
<div style="left:-779px;top:-39px;width:1037px;height:700px">
<div class="hd" style="top:44px"><svg style="left:7px;top:2px" width="13" height="13"><rect x="1" y="1" width="11" height="11" fill="none" stroke="#fff" stroke-width="2"/><path d="M3.4 6.4L5.6 8.8 9.8 3.4" fill="none" stroke="#fff" stroke-width="2"/></svg><span>Basisinformationen</span></div>
<div class="sec" style="left:785px;top:72px;letter-spacing:-0.2px">Name</div>
<div class="sec" style="left:786px;top:90px;letter-spacing:0.65px">Typ</div>
<div class="fld" style="top:70px"></div><div class="fld" style="top:88px;height:38px"></div>
<div class="val" style="top:70.5px;left:844px;text-align:left;font-family:Liberation Sans;letter-spacing:-0.05px">Spw_pu22d</div>
<div class="val" style="top:90.5px;left:844px;text-align:left;font-family:Liberation Sans;letter-spacing:-0.15px">dickwandig</div>
<div style="left:782px;top:134px;width:222px;height:1px;background:#6a9ab0"></div>
<div style="left:782px;top:179px;width:222px;height:1px;background:#6a9ab0"></div>
<div class="sec" style="left:815px;top:140px;letter-spacing:0.44px">Basiseinheit</div>
<div class="sec" style="left:815px;top:161px;letter-spacing:0.25px">Nachkommastellen</div>
<div style="left:917px;top:137px;width:49px;height:19px;background:#fafaf8;border:1px dotted #111"></div>
<div class="val" style="left:924px;top:139px;width:20px;text-align:left">cm</div>
<svg style="left:950px;top:140px" width="13" height="13"><rect x=".5" y=".5" width="12" height="12" fill="#f4f4f4" stroke="#111"/><path d="M2.6 4.4H10.4L6.5 9.2z" fill="#111"/></svg>
<div style="left:943px;top:158px;width:23px;height:19px;background:#fafaf8;border:1px dotted #111"></div>
<div class="val" style="left:950px;top:160px;width:10px;text-align:left">2</div>
<svg style="left:785px;top:187px" width="13" height="13"><rect x="1" y="1" width="11" height="11" fill="#e4e4e4" stroke="#6a9ab0" stroke-width="2"/><path d="M3.4 6.4L5.6 8.8 9.8 3.4" fill="none" stroke="#6a9ab0" stroke-width="2.1"/></svg>
<div class="sec" style="top:187px;letter-spacing:0.11px">Fläche, Schwerpunkt +<span style="position:static;letter-spacing:0.5px;margin-left:5.4px">Hauptachsen</span></div>
<div class="fld" style="top:208px"></div>
<div class="lab" style="top:208px">A</div>
<div class="eq" style="top:208px">=</div>
<div class="val" style="top:208px">216.95</div>
<div class="un" style="top:208px">cm<sup>2</sup></div>
<div class="fld" style="top:226px"></div>
<div class="lab" style="top:226px">e<sub>y</sub></div>
<div class="eq" style="top:226px">=</div>
<div class="val" style="top:226px">47.22</div>
<div class="un" style="top:226px">cm</div>
<div class="fld" style="top:244px"></div>
<div class="lab" style="top:244px">e<sub>z</sub></div>
<div class="eq" style="top:244px">=</div>
<div class="val" style="top:244px">21.74</div>
<div class="un" style="top:244px">cm</div>
<div class="fld" style="top:262px"></div>
<div class="lab" style="top:262px">α</div>
<div class="eq" style="top:262px">=</div>
<div class="val" style="top:262px">19.65</div>
<div class="un" style="top:262px">°</div>
<svg style="left:785px;top:285px" width="13" height="13"><rect x="1" y="1" width="11" height="11" fill="#e4e4e4" stroke="#6a9ab0" stroke-width="2"/><path d="M3.4 6.4L5.6 8.8 9.8 3.4" fill="none" stroke="#6a9ab0" stroke-width="2.1"/></svg>
<div class="sec" style="top:285px;letter-spacing:0.36px">Ausdehnung</div>
<div class="fld" style="top:306px"></div>
<div class="lab" style="top:306px">y<sub>min</sub></div>
<div class="eq" style="top:306px">=</div>
<div class="val" style="top:306px">-14.27</div>
<div class="un" style="top:306px">cm</div>
<div class="fld" style="top:324px"></div>
<div class="lab" style="top:324px">y<sub>max</sub></div>
<div class="eq" style="top:324px">=</div>
<div class="val" style="top:324px">108.76</div>
<div class="un" style="top:324px">cm</div>
<div class="fld" style="top:342px"></div>
<div class="lab" style="top:342px">z<sub>min</sub></div>
<div class="eq" style="top:342px">=</div>
<div class="val" style="top:342px">-0.60</div>
<div class="un" style="top:342px">cm</div>
<div class="fld" style="top:360px"></div>
<div class="lab" style="top:360px">z<sub>max</sub></div>
<div class="eq" style="top:360px">=</div>
<div class="val" style="top:360px">44.10</div>
<div class="un" style="top:360px">cm</div>
<div class="fld" style="top:381px"></div>
<div class="lab" style="top:381px">b</div>
<div class="eq" style="top:381px">=</div>
<div class="val" style="top:381px">123.04</div>
<div class="un" style="top:381px">cm</div>
<div class="fld" style="top:399px"></div>
<div class="lab" style="top:399px">h</div>
<div class="eq" style="top:399px">=</div>
<div class="val" style="top:399px">44.70</div>
<div class="un" style="top:399px">cm</div>
<div class="fld" style="top:420px"></div>
<div class="lab" style="top:420px">U</div>
<div class="eq" style="top:420px">=</div>
<div class="val" style="top:420px">395.47</div>
<div class="un" style="top:420px">cm</div>
<div class="hd" style="top:443px"><svg style="left:7px;top:2px" width="13" height="13"><rect x="1" y="1" width="11" height="11" fill="none" stroke="#fff" stroke-width="2"/><path d="M3.4 6.4L5.6 8.8 9.8 3.4" fill="none" stroke="#fff" stroke-width="2"/></svg><span>Trägheitsmomente (m-n)</span></div>
<div class="fld" style="top:469px"></div>
<div class="lab" style="top:469px">I<sub>m</sub></div>
<div class="eq" style="top:469px">=</div>
<div class="val" style="top:469px">58661.74</div>
<div class="un" style="top:469px">cm<sup>4</sup></div>
<div class="fld" style="top:487px"></div>
<div class="lab" style="top:487px">I<sub>n</sub></div>
<div class="eq" style="top:487px">=</div>
<div class="val" style="top:487px">279240.91</div>
<div class="un" style="top:487px">cm<sup>4</sup></div>
<div class="fld" style="top:505px"></div>
<div class="lab" style="top:505px">I<sub>mn</sub></div>
<div class="eq" style="top:505px">=</div>
<div class="val" style="top:505px">90291.13</div>
<div class="un" style="top:505px">cm<sup>4</sup></div>
<svg style="left:785px;top:528px" width="13" height="13"><rect x="1" y="1" width="11" height="11" fill="#e4e4e4" stroke="#6a9ab0" stroke-width="2"/><path d="M3.4 6.4L5.6 8.8 9.8 3.4" fill="none" stroke="#6a9ab0" stroke-width="2.1"/></svg>
<div class="sec" style="top:528px;letter-spacing:0.17px">Widerstandsmomente</div>
<div class="fld" style="top:549px"></div>
<div class="lab" style="top:549px">W<sub>m+</sub></div>
<div class="eq" style="top:549px">=</div>
<div class="val" style="top:549px">2622.89</div>
<div class="un" style="top:549px">cm<sup>3</sup></div>
<div class="fld" style="top:567px"></div>
<div class="lab" style="top:567px">W<sub>m-</sub></div>
<div class="eq" style="top:567px">=</div>
<div class="val" style="top:567px">2625.94</div>
<div class="un" style="top:567px">cm<sup>3</sup></div>
<div class="fld" style="top:585px"></div>
<div class="lab" style="top:585px">W<sub>n+</sub></div>
<div class="eq" style="top:585px">=</div>
<div class="val" style="top:585px">4537.22</div>
<div class="un" style="top:585px">cm<sup>3</sup></div>
<div class="fld" style="top:603px"></div>
<div class="lab" style="top:603px">W<sub>n-</sub></div>
<div class="eq" style="top:603px">=</div>
<div class="val" style="top:603px">4541.10</div>
<div class="un" style="top:603px">cm<sup>3</sup></div>
<svg style="left:785px;top:626px" width="13" height="13"><rect x="1" y="1" width="11" height="11" fill="#e4e4e4" stroke="#6a9ab0" stroke-width="2"/><path d="M3.4 6.4L5.6 8.8 9.8 3.4" fill="none" stroke="#6a9ab0" stroke-width="2.1"/></svg>
<div class="sec" style="top:626px;letter-spacing:0.33px">Randabstände</div>
<div class="fld" style="top:647px"></div>
<div class="lab" style="top:647px">h<sub>m+</sub></div>
<div class="eq" style="top:647px">=</div>
<div class="val" style="top:647px">61.54</div>
<div class="un" style="top:647px">cm</div>
</div></div>
<svg style="left:1012px;top:37px" width="14" height="624" viewBox="0 0 14 624">
<rect width="14" height="624" fill="#d2d2d2"/>
<rect x="3" y="311" width="1" height="300" fill="#e2e2e2"/><rect x="5.3" y="311" width="1.7" height="300" fill="#6c6c6c"/><rect x="7" y="311" width="1" height="300" fill="#b8b8b8"/><rect x="8.6" y="311" width="1" height="300" fill="#e4e4e4"/><rect x="11" y="311" width="1" height="300" fill="#e0e0e0"/>
<rect x="0" y="0" width="14" height="14" fill="#6a6a6a"/><rect x="0" y="0" width="13" height="13" fill="#a4a4a4"/><rect x="0" y="0" width="12.5" height="12.5" fill="#fff"/><rect x="1" y="1" width="11.5" height="11.5" fill="#e4e4e4"/><path d="M2 9H11L6.5 3.8z" fill="#000"/>
<rect x="0" y="15" width="14" height="296" fill="#6a6a6a"/><rect x="0" y="15" width="13" height="295" fill="#a4a4a4"/><rect x="0" y="15" width="12.5" height="294.5" fill="#fff"/><rect x="1" y="16" width="11.5" height="293.5" fill="#e4e4e4"/>
<rect x="0" y="610" width="14" height="14" fill="#6a6a6a"/><rect x="0" y="610" width="13" height="13" fill="#a4a4a4"/><rect x="0" y="610" width="12.5" height="12.5" fill="#fff"/><rect x="1" y="611" width="11.5" height="11.5" fill="#e4e4e4"/><path d="M2 614.6H11L6.5 619.8z" fill="#000"/>
</svg>
</body></html>
